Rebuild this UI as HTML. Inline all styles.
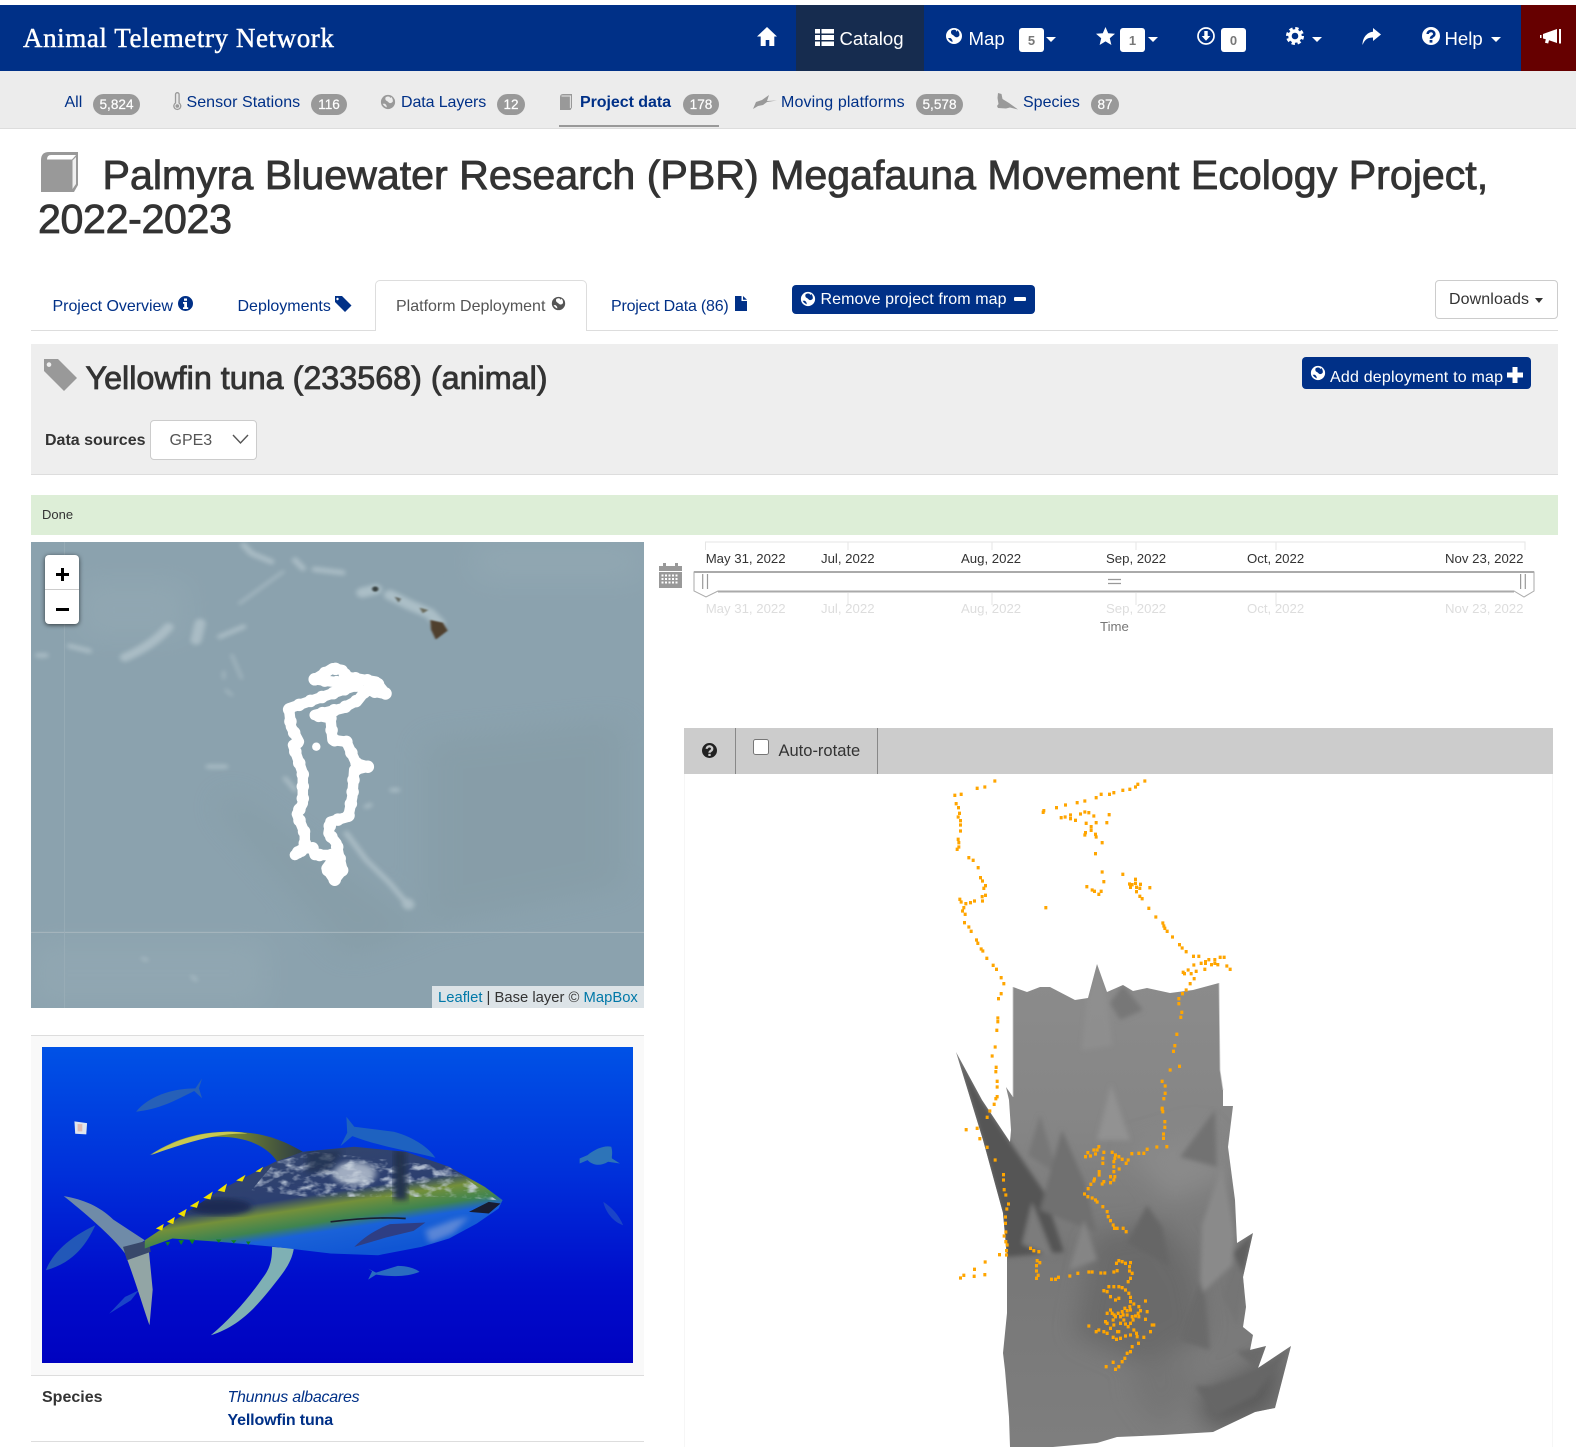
<!DOCTYPE html>
<html lang="en"><head><meta charset="utf-8"><title>Animal Telemetry Network</title>
<style>
html,body{margin:0;padding:0;background:#fff}
body{position:relative;width:1576px;height:1447px;overflow:hidden;font-family:"Liberation Sans",sans-serif;font-size:16px;color:#333}
a{color:#003087;text-decoration:none}
.a{position:absolute}
.t{position:absolute;white-space:nowrap;line-height:20px;height:20px}
.w{color:#fff}
.i{position:absolute;display:block;overflow:visible}
.b{position:absolute;top:94px;height:21px;border-radius:11px;background:#999;color:#fff;font-size:13.6px;line-height:22px;text-align:center;-webkit-text-stroke:.2px #fff}
.nb{position:absolute;top:28px;width:25px;height:24px;background:#fff;border-radius:3px;color:#777;font-size:13px;font-weight:bold;line-height:25px;text-align:center}
.c{position:absolute;width:0;height:0;border-left:5px solid transparent;border-right:5px solid transparent;border-top:5px solid #fff}
.d{position:absolute;font-size:13.2px;line-height:16px;white-space:nowrap;color:#333}
.e{position:absolute;font-size:13.2px;line-height:16px;white-space:nowrap;color:#ddd}
.btn{position:absolute;background:#003087;border-radius:4px}
.h{-webkit-text-stroke:.85px currentColor}
</style></head><body>
<svg width="0" height="0" style="position:absolute"><defs>
<symbol id="globe" viewBox="0 0 18 18"><path fill-rule="evenodd" fill="currentColor" d="M9 1a8 8 0 1 0 0 16A8 8 0 0 0 9 1zM6.500 3.500C5.500 5 6 7 7.500 7.800c1.500.7 2 2 3.500 2.400 1.200.3 2.500-.5 3.300-1.500.5-2-.2-4-1.800-5.500l-.8 1.500-1-1.600C9.800 2.500 8 2.700 6.500 3.500zM3 11c1 2 3 3.500 4.500 4 .3-1.500-.5-3-2-4z"/></symbol>
</defs></svg>

<!-- navbar -->
<div class="a" style="left:0;top:5px;width:1576px;height:66px;background:#003087"></div>
<div class="a" style="left:796px;top:5px;width:128px;height:66px;background:#162c4f"></div>
<div class="a" style="left:1521px;top:5px;width:55px;height:66px;background:#660000"></div>
<a class="t w" style="left:23px;top:24px;height:28px;line-height:28px;font-family:'Liberation Serif',serif;font-size:27px;letter-spacing:.58px;color:#fff;-webkit-text-stroke:.45px #fff">Animal Telemetry Network</a>
<svg class="i" style="left:757px;top:27px" width="20" height="19" viewBox="0 0 20 19"><path fill="#fff" d="M10 0L20 9.500h-2.700V19h-5v-6H8.700v6h-5V9.500H0z"/></svg>
<svg class="i" style="left:815px;top:29px" width="19" height="17" viewBox="0 0 19 17"><path fill="#fff" d="M0 0h5v4.500H0zM6.500 0H19v4.500H6.500zM0 6h5v5H0zM6.500 6H19v5H6.500zM0 12.500h5V17H0zM6.500 12.500H19V17H6.500z"/></svg>
<span class="t w" style="left:839.500px;top:29px;font-size:18.6px">Catalog</span>
<svg class="i w" style="left:945px;top:27px" width="18" height="18"><use href="#globe"/></svg>
<span class="t w" style="left:968.500px;top:29px;font-size:18.6px">Map</span>
<span class="nb" style="left:1019px">5</span><span class="c" style="left:1046px;top:37px"></span>
<svg class="i" style="left:1096px;top:27px" width="19" height="18" viewBox="0 0 19 18"><path fill="#fff" d="M9.500 0l2.700 6.200 6.800.6-5.200 4.400 1.600 6.800-5.900-3.600L3.600 18l1.600-6.800L0 6.800l6.800-.6z"/></svg>
<span class="nb" style="left:1120px">1</span><span class="c" style="left:1148px;top:37px"></span>
<svg class="i" style="left:1197px;top:27px" width="18" height="18" viewBox="0 0 18 18"><circle cx="9" cy="9" r="8" fill="none" stroke="#fff" stroke-width="1.700"/><path fill="#fff" d="M7.300 4h3.400v5h2.600L9 13.800 4.700 9h2.600z"/></svg>
<span class="nb" style="left:1221px">0</span>
<svg class="i" style="left:1286px;top:27px" width="18" height="18" viewBox="0 0 18 18"><circle cx="9" cy="9" r="5" fill="none" stroke="#fff" stroke-width="3.400"/><circle cx="9" cy="9" r="7.500" fill="none" stroke="#fff" stroke-width="3" stroke-dasharray="3.300 2.590"/></svg>
<span class="c" style="left:1312px;top:37px"></span>
<svg class="i" style="left:1362px;top:28px" width="19" height="17" viewBox="0 0 19 17"><path fill="#fff" d="M11 0l8 6.500-8 6.500V9.500C6 9.500 3 11 .5 17 .5 9.500 5 4.200 11 3.700z"/></svg>
<svg class="i" style="left:1422px;top:27px" width="18" height="18" viewBox="0 0 18 18"><circle cx="9" cy="9" r="9" fill="#fff"/><path fill="none" stroke="#003087" stroke-width="2.600" d="M5.700 7a3.300 2.900 0 1 1 5 2.400c-1.200.7-1.700 1.200-1.700 2.300"/><rect x="7.600" y="13" width="2.800" height="2.600" fill="#003087"/></svg>
<span class="t w" style="left:1444.500px;top:29px;font-size:18.6px">Help</span>
<span class="c" style="left:1491px;top:37px"></span>
<svg class="i" style="left:1540px;top:28px" width="21" height="17" viewBox="0 0 21 17"><path fill="#fff" d="M3 6l14-5v14l-8-2.800-.8 3.300-3.200-.8.800-3.400L3 10.500zM19 1h2v14.500h-2zM0 7h1.500v3H0z"/></svg>

<!-- subnav -->
<div class="a" style="left:0;top:71px;width:1576px;height:57px;background:#ececec;border-bottom:1px solid #ddd"></div>
<a class="t" style="left:64.500px;top:93px">All</a><span class="b" style="left:93px;width:47px">5,824</span>
<svg class="i" style="left:173px;top:93px" width="9" height="18" viewBox="0 0 9 18"><path fill="#e8e8e8" stroke="#999" stroke-width="1.300" d="M2.500 1.500a1.800 1.800 0 0 1 3.600 0V10a3.500 3.500 0 1 1-3.600 0z"/><circle cx="4.300" cy="13" r="1.800" fill="#999"/></svg>
<a class="t" style="left:186.500px;top:93px;letter-spacing:.05px">Sensor Stations</a><span class="b" style="left:311px;width:36px">116</span>
<svg class="i" style="left:380px;top:94px;color:#999" width="16" height="16"><use href="#globe"/></svg>
<a class="t" style="left:401px;top:93px;letter-spacing:-.1px">Data Layers</a><span class="b" style="left:497px;width:28px">12</span>
<svg class="i" style="left:560px;top:94px" width="12" height="16" viewBox="0 0 12 16"><path fill="#999" d="M0 3Q0 0 3 0h9v13.500L10.500 16H0z"/><path fill="none" stroke="#fff" stroke-width=".8" d="M1.500 2h9.500M10.300 2.500V14"/></svg>
<a class="t" style="left:580px;top:93px;font-weight:bold;letter-spacing:-.05px">Project data</a><span class="b" style="left:683px;width:36px">178</span>
<div class="a" style="left:559px;top:125px;width:160px;height:2px;background:#999"></div>
<svg class="i" style="left:753px;top:94px" width="24" height="15" viewBox="0 0 24 15"><path fill="#999" d="M0 15l3-7L9 6l7-5-2 6 10-.5-10 1.500-4 3-5 1z"/></svg>
<a class="t" style="left:781px;top:93px;letter-spacing:.12px">Moving platforms</a><span class="b" style="left:916px;width:47px">5,578</span>
<svg class="i" style="left:996px;top:93px" width="23" height="17" viewBox="0 0 23 17"><path fill="#999" d="M2 0l3.500 1 1 5 6.500 4 9 6.500-8-2-4 1-8-.5-1-2 1.500-2-1-6z"/></svg>
<a class="t" style="left:1023px;top:93px">Species</a><span class="b" style="left:1091px;width:28px">87</span>

<!-- title -->
<svg class="i" style="left:41px;top:152px" width="38" height="41" viewBox="0 0 38 41"><path fill="#999" d="M0 8Q0 0 8 0h29v33l-4 7H0z"/><path fill="#fff" d="M6 7.500Q6 3 10 3h25L31 7.500z"/><path fill="#fff" d="M31.500 8.500L35 5v27l-3.500 5z" opacity=".85"/></svg>
<h1 class="a h" style="margin:0;left:102.500px;top:153px;line-height:44px;font-size:41.15px;font-weight:normal;white-space:nowrap;color:#333">Palmyra Bluewater Research (PBR) Megafauna Movement Ecology Project,</h1>
<div class="a h" style="left:38px;top:197px;line-height:44px;font-size:41.15px;letter-spacing:-.35px;white-space:nowrap;color:#333">2022-2023</div>

<!-- tabs -->
<div class="a" style="left:31px;top:330px;width:1527px;height:1px;background:#ddd"></div>
<div class="a" style="left:375px;top:280px;width:212px;height:51px;box-sizing:border-box;background:#fff;border:1px solid #ddd;border-bottom:none;border-radius:5px 5px 0 0"></div>
<a class="t" style="left:52.500px;top:297px;letter-spacing:-.03px">Project Overview</a>
<svg class="i" style="left:178px;top:296px" width="15" height="15" viewBox="0 0 15 15"><circle cx="7.500" cy="7.500" r="7.500" fill="#003087"/><path fill="#fff" d="M6 2.500h3v2.300H6zM5 6h4v5.200h1.200V13H5v-1.800h1.200V7.800H5z"/></svg>
<a class="t" style="left:237.500px;top:297px">Deployments</a>
<svg class="i" style="left:335px;top:296px" width="17" height="16" viewBox="0 0 17 16"><path fill="#003087" fill-rule="evenodd" d="M0 0h7l9.500 9.500L10 16 0 6zM2.500 1.800a1.200 1.200 0 1 0 .01 0z"/></svg>
<span class="t" style="left:396px;top:297px;color:#555">Platform Deployment</span>
<svg class="i" style="left:551px;top:296px;color:#555" width="15" height="15"><use href="#globe"/></svg>
<a class="t" style="left:611px;top:297px;letter-spacing:-.2px">Project Data (86)</a>
<svg class="i" style="left:735px;top:296px" width="12" height="15" viewBox="0 0 12 15"><path fill="#003087" d="M0 0h6.500v5H12v10H0zM8 0l4 3.700H8z"/></svg>

<div class="btn" style="left:792px;top:285px;width:243px;height:29px"></div>
<svg class="i w" style="left:800px;top:291px" width="16" height="16"><use href="#globe"/></svg>
<span class="t w" style="left:820.500px;top:290px;letter-spacing:.09px">Remove project from map</span>
<div class="a" style="left:1014px;top:297px;width:12px;height:4px;background:#fff;border-radius:1px"></div>

<div class="a" style="left:1435px;top:280px;width:123px;height:39px;box-sizing:border-box;border:1px solid #ccc;border-radius:4px;background:#fff"></div>
<span class="t" style="left:1449px;top:290px;letter-spacing:.1px">Downloads</span>
<span class="c" style="left:1535px;top:298px;border-top-color:#333;border-left-width:4.500px;border-right-width:4.500px"></span>

<!-- panel -->
<div class="a" style="left:31px;top:344px;width:1527px;height:130px;background:#eee;border-bottom:1px solid #ddd"></div>
<svg class="i" style="left:44px;top:359px" width="33" height="32" viewBox="0 0 33 32"><path fill="#999" fill-rule="evenodd" d="M0 0h14l19 19-13 13L0 12zM5 3.300a2.300 2.300 0 1 0 .01 0z"/></svg>
<div class="a h" style="left:85.500px;top:358px;line-height:40px;font-size:32.3px;white-space:nowrap;color:#333">Yellowfin tuna (233568) (animal)</div>
<div class="btn" style="left:1302px;top:357px;width:229px;height:32px"></div>
<svg class="i w" style="left:1310px;top:365px" width="16" height="16"><use href="#globe"/></svg>
<span class="t w" style="left:1330px;top:367.500px;letter-spacing:.2px">Add deployment to map</span>
<svg class="i" style="left:1507px;top:367px" width="16" height="16" viewBox="0 0 16 16"><path fill="#fff" d="M5.500 0h5v5.500H16v5h-5.500V16h-5v-5.500H0v-5h5.500z"/></svg>
<span class="t" style="left:45px;top:431px;font-weight:bold;color:#333">Data sources</span>
<div class="a" style="left:150px;top:420px;width:107px;height:40px;box-sizing:border-box;background:#fff;border:1px solid #ccc;border-radius:4px"></div>
<span class="t" style="left:169.500px;top:431px;color:#555">GPE3</span>
<svg class="i" style="left:232px;top:434px" width="17" height="11" viewBox="0 0 17 11"><path fill="none" stroke="#555" stroke-width="1.400" d="M1 1l7.500 8L16 1"/></svg>

<!-- green -->
<div class="a" style="left:31px;top:495px;width:1527px;height:40px;background:#ddeed7"></div>
<div class="t" style="left:42px;top:505px;font-size:13px;color:#333">Done</div>

<!-- map -->
<div class="a" style="left:31px;top:542px;width:613px;height:466px;background:#8ba2ae;overflow:hidden">
<svg class="i" style="left:0;top:0;overflow:hidden" width="613" height="466" viewBox="2.500 6 1550 1398" preserveAspectRatio="none">
<defs><filter id="bl" x="-30%" y="-30%" width="160%" height="160%"><feGaussianBlur stdDeviation="6"/></filter><filter id="bs" x="-30%" y="-30%" width="160%" height="160%"><feGaussianBlur stdDeviation="2.500"/></filter><filter id="b2" x="-30%" y="-30%" width="160%" height="160%"><feGaussianBlur stdDeviation="40"/></filter></defs>
<g filter="url(#b2)" opacity=".3">
<path fill="#7f949c" d="M500 750l500 420-200 80-320-440zM1000 600l500-60v500l-500 120z"/>
<path fill="#9db1ba" d="M0 1200h600v200H0zM120 120h280v180H120zM1120 0h430v130h-430z"/>
</g>
<g filter="url(#bl)" fill="none" stroke="#b4c5cc" stroke-linecap="round" opacity=".75">
<path stroke-width="26" d="M240 352c40-20 80-50 110-90"/><path stroke-width="14" d="M100 318l50 15M20 346h20"/>
<path stroke-width="28" d="M430 250l-10 50"/><path stroke-width="14" d="M480 290l60-30"/>
<path stroke-width="16" d="M540 15l20 25 50 25M670 60l20 25M720 88l70 10"/>
<path stroke-width="7" d="M530 190l110-95"/>
<path stroke-width="6" d="M510 345l25 70M490 395v20M495 450l15 15"/>
<path stroke-width="14" d="M800 880l50 80 60 70 50 70"/><path stroke-width="30" d="M955 1090l2 4"/>
<path stroke-width="12" d="M645 715l25 35M450 680h45M850 800l10-5M915 750h15"/>
<path stroke-width="8" d="M285 1255l10 5M410 1310l10 10"/>
<path stroke-width="30" stroke="#b6c8cf" d="M840 158l35-10M910 165l50 30 50 25 25 30"/>
</g>
<path stroke="#a7b7be" stroke-width="3" d="M0 1177h1555"/><path stroke="#9aaeb7" stroke-width="2" d="M87 0v1410"/>
<g filter="url(#bs)"><circle cx="873" cy="147" r="8" fill="#37413f"/><path fill="#5d625a" d="M922 170l16 6-6 12z"/><path fill="#6a6a5c" d="M985 203l22 7-14 10z"/>
<path fill="#4f3f2e" d="M1012 240l32 8 12 24-30 27-12-30z"/></g>
</svg>
<svg class="i" style="left:-31px;top:-542px" width="700" height="1100" viewBox="0 0 700 1100"><defs><path id="trk" d="M314.700 679.300L332.500 668.300 342.400 670 346.300 676.700 376 681.700 385.900 694 366 690 358.200 700 342.400 708.300 314.700 715 330.500 718.300 332.500 740 346.300 741.700 356.200 763.300 368 766.700 354.200 770 352.300 796.700 348.300 816.700 330.500 821.700 328.500 833.300 336.500 843.300 338.400 853.300 342.400 870 334.500 880 326.600 868.300 336.500 855 314.700 855 312.700 848.300 304.800 848.300 294.900 855 304.800 846.700 304.800 833.300 296.900 814 302.800 803.300 302.800 773.300 293 745 298.900 741.700 291 726.700 289 708.300 342.400 690 358.200 685 314.700 679.300"/></defs><use href="#trk" fill="none" stroke="#fff" stroke-width="10.500" stroke-linecap="round" stroke-linejoin="round"/><use href="#trk" fill="none" stroke="#fff" stroke-width="12.500" stroke-linecap="round" stroke-dasharray="0 12"/><path fill="#fff" d="M326 858h16l3 13-11 12-9-14z"/><circle cx="316.300" cy="746.700" r="4.200" fill="#fff"/></svg>
<div class="a" style="left:14px;top:13px;width:34px;height:69px;background:#fff;border-radius:4px;box-shadow:0 1px 5px rgba(0,0,0,.65)">
<div class="a" style="left:0;top:34px;width:34px;height:1px;background:#ccc"></div>
<div class="a" style="left:11px;top:18px;width:13px;height:2.500px;background:#000"></div><div class="a" style="left:16.200px;top:13px;width:2.500px;height:13px;background:#000"></div>
<div class="a" style="left:11px;top:53px;width:13px;height:2.500px;background:#000"></div></div>
<div class="a" style="left:401px;top:444px;width:212px;height:22px;background:rgba(255,255,255,.7);line-height:24px;font-size:14.8px;white-space:nowrap;color:#333;padding-left:6px;box-sizing:border-box"><a style="color:#0078a8">Leaflet</a> | Base layer © <a style="color:#0078a8">MapBox</a></div>
</div>

<!-- fish -->
<div class="a" style="left:31px;top:1035px;width:613px;height:339px;background:#f9f9f9;border-top:1px solid #ddd;border-bottom:1px solid #ddd"></div>
<svg class="i" style="left:42px;top:1047px;overflow:hidden" width="591" height="316" viewBox="30 51 1495 947" preserveAspectRatio="none">
<defs>
<linearGradient id="sea" x1="0" y1="0" x2="0" y2="1"><stop offset="0" stop-color="#0052e6"/><stop offset=".4" stop-color="#0030da"/><stop offset=".75" stop-color="#000ccb"/><stop offset="1" stop-color="#0002c0"/></linearGradient>
<linearGradient id="body" gradientUnits="userSpaceOnUse" x1="720" y1="350" x2="780" y2="680"><stop offset="0" stop-color="#33456e"/><stop offset=".42" stop-color="#2c3f70"/><stop offset=".53" stop-color="#74903a"/><stop offset=".67" stop-color="#3f8450"/><stop offset=".76" stop-color="#1a62d8"/><stop offset="1" stop-color="#1056d4"/></linearGradient>
<linearGradient id="fin" x1="0" y1="0" x2="1" y2="0"><stop offset="0" stop-color="#a8b860"/><stop offset=".5" stop-color="#7a8c30"/><stop offset="1" stop-color="#2c3c44"/></linearGradient>
<filter id="f1"><feGaussianBlur stdDeviation="8"/></filter>
<filter id="mot" x="-10%" y="-10%" width="120%" height="120%"><feTurbulence type="fractalNoise" baseFrequency=".03 .05" numOctaves="3" seed="4"/><feColorMatrix values="0 0 0 0 .58 0 0 0 0 .65 0 0 0 0 .75 3 0 0 0 -1.350"/><feComposite operator="in" in2="SourceGraphic"/></filter>
<clipPath id="bc"><path d="M290 630L480 480 620 395 690 365 820 350 950 365 1060 410 1150 470 1195 510 1185 535 1130 580 1060 625 990 650 880 675 760 670 620 650 480 635 360 625 290 655z"/></clipPath>
</defs>
<rect x="30" y="51" width="1495" height="947" fill="url(#sea)"/>
<!-- small fish -->
<g fill="#2660b8"><path d="M268 245c30-45 90-70 150-70l17-30-8 30 8 30-20-22c-50 30-90 55-147 62z"/>
<path fill="#1e62c0" d="M800 260l20 30 100 15c50 15 90 50 105 78-60-20-130-30-210-65l-30 30 17-40z"/>
<path fill="#2258b8" d="M40 720c15-50 60-100 125-135-20 50-50 110-125 135z"/>
<path fill="#2a6cc0" d="M855 715l20 12 55-20c25 0 45 8 55 18-30 15-70 15-110 8l-20 15 10-25z"/>
<path fill="#2d74b8" d="M1390 385l20-10c20-20 45-30 60-25 5 20 0 30 2 35l20 15-30-5c-20 15-40 10-52-5l-20 10z"/>
<path fill="#1a44c8" d="M1450 515c20 15 40 40 50 70-25-10-45-40-50-70zM200 850l40-50 35-20-20 30z"/></g>
<path fill="#dfe5ee" d="M112 274l32 5-2 34-28-2z"/><path fill="#e0a090" d="M120 282h12v22h-12z" opacity=".6"/>
<!-- tail -->
<path fill="#6f8ba8" d="M85 498c50 10 90 30 125 70l80 62-50 40c-30-50-110-130-155-172z"/>
<path fill="#92a5a5" d="M240 670l60-12 10 120-8 107c-15-50-35-130-62-215z"/>
<path fill="#38486a" d="M235 650l65-20 5 35-60 25z"/>
<!-- fins -->
<path fill="url(#fin)" d="M302 375c60-45 120-70 200-70 80 0 130 20 188 60l-65 30c-15-30-50-60-100-70-70-15-140 5-223 50z"/>
<path fill="#c8c850" d="M305 375c60-45 120-68 195-70 20 0 40 2 50 6-70-3-140 20-245 64z"/>
<path fill="#7fb0b4" d="M612 650l55 5c-5 40-25 70-45 100-40 60-85 130-165 160 50-50 95-110 130-170 20-30 25-55 25-95z"/>
<!-- body -->
<path fill="url(#body)" d="M290 630L480 480 620 395 690 365 820 350 950 365 1060 410 1150 470 1195 510 1185 535 1130 580 1060 625 990 650 880 675 760 670 620 650 480 635 360 625 290 655z"/>
<g clip-path="url(#bc)">
<path d="M620 395L720 365 1060 410 1180 510 1050 500 700 500 560 480z" fill="#fff" filter="url(#mot)" opacity=".85"/>
<ellipse cx="820" cy="430" rx="55" ry="35" fill="#c8d2dc" filter="url(#f1)" opacity=".75"/>
<path d="M920 360h30l5 150h-35z" fill="#22304e" filter="url(#f1)"/>
<path d="M700 360h90l-30 60-60 10z" fill="#22304e" filter="url(#f1)" opacity=".7"/>
<ellipse cx="480" cy="530" rx="80" ry="25" fill="#1c2c52" filter="url(#f1)"/>
<path d="M1000 600l70-30 40-10-40 50-60 30z" fill="#8aa4d8" filter="url(#f1)" opacity=".6"/>
<path fill="#181c30" d="M1110 545l50-30 30 5-30 30z"/>
</g>
<path fill="none" stroke="#1a2030" stroke-width="5" d="M760 575c70-10 130-15 190-10"/>
<path fill="#2e3e84" d="M820 650c30-35 60-55 90-68l90-5-30 25-70 20z"/>
<g fill="#f0e000"><path d="M318 595l20-14-4 20zM346 575l20-15-4 22zM374 551l22-15-6 24zM404 528l24-17-6 22zM438 503l24-19-6 24zM474 481l24-21-6 26zM521 451l24-17-8 20zM570 424l20-14-8 16z"/></g>
<g fill="#108020"><path d="M342 635h12l-6 12zM375 630h14l-7 14zM402 628h15l-7 14zM470 628h14l-7 10zM508 630h14l-7 10zM546 634h12l-6 10z"/></g>
</svg>
<div class="t" style="left:42px;top:1388px;font-weight:bold;color:#333">Species</div>
<a class="t" style="left:227.500px;top:1388px;font-style:italic;letter-spacing:-.25px">Thunnus albacares</a>
<a class="t" style="left:227.500px;top:1411px;font-weight:bold;letter-spacing:-.15px">Yellowfin tuna</a>
<div class="a" style="left:31px;top:1441px;width:613px;height:1px;background:#ddd"></div>

<!-- timeline -->
<svg class="i" style="left:659px;top:563px" width="23" height="25" viewBox="0 0 23 25"><path fill="#999" fill-rule="evenodd" d="M0 3h4V0h3v3h9V0h3v3h4v5H0zM0 9h23v16H0zM2.500 11.500v2h2v-2zM6 11.500v2h2v-2zM9.500 11.500v2h2v-2zM13 11.500v2h2v-2zM16.500 11.500v2h2v-2zM2.500 15v2h2v-2zM6 15v2h2v-2zM9.500 15v2h2v-2zM13 15v2h2v-2zM16.500 15v2h2v-2zM2.500 18.500v2h2v-2zM6 18.500v2h2v-2zM9.500 18.500v2h2v-2zM13 18.500v2h2v-2zM16.500 18.500v2h2v-2z"/></svg>
<svg class="i" style="left:690px;top:540px" width="850" height="70" viewBox="690 540 850 70">
<path fill="none" stroke="#e5e5e5" d="M705.500 550v-8h819.500v8M848 542v8M992 542v8M1136 542v8M1276 542v8M848 593v12M992 593v12M1136 593v12M1276 593v12"/>
<path fill="#fff" stroke="#aaa" stroke-width="1" d="M694 572H1534V591L1524 597 1514 591H718L706 597 694 591z"/>
<path stroke="#aaa" stroke-width="2" fill="none" d="M694 572H1534M718 591.500H1514"/>
<path stroke="#999" stroke-width="1.200" fill="none" d="M702.700 574v15M707.500 574v15M1520.600 574v15M1525.300 574v15M1108 579.500h13M1108 583.500h13"/>
</svg>
<span class="d" style="left:705.700px;top:551px">May 31, 2022</span><span class="d" style="left:821px;top:551px">Jul, 2022</span><span class="d" style="left:961px;top:551px">Aug, 2022</span><span class="d" style="left:1106px;top:551px">Sep, 2022</span><span class="d" style="left:1247px;top:551px">Oct, 2022</span><span class="d" style="left:1445px;top:551px">Nov 23, 2022</span>
<span class="e" style="left:705.700px;top:600.500px">May 31, 2022</span><span class="e" style="left:821px;top:600.500px">Jul, 2022</span><span class="e" style="left:961px;top:600.500px">Aug, 2022</span><span class="e" style="left:1106px;top:600.500px">Sep, 2022</span><span class="e" style="left:1247px;top:600.500px">Oct, 2022</span><span class="e" style="left:1445px;top:600.500px">Nov 23, 2022</span>
<span class="d" style="left:1100px;top:619px;color:#777">Time</span>

<!-- 3D toolbar -->
<div class="a" style="left:684px;top:728px;width:869px;height:719px;border-left:1px solid #f6f6f6;border-right:1px solid #f6f6f6;box-sizing:border-box"></div>
<div class="a" style="left:684px;top:728px;width:869px;height:46px;background:#ccc"></div>
<div class="a" style="left:735px;top:728px;width:1px;height:46px;background:#888"></div>
<div class="a" style="left:877px;top:728px;width:1px;height:46px;background:#888"></div>
<svg class="i" style="left:702px;top:743px" width="15" height="15" viewBox="0 0 18 18"><circle cx="9" cy="9" r="9" fill="#222"/><path fill="none" stroke="#ccc" stroke-width="2.800" d="M5.700 7a3.300 2.900 0 1 1 5 2.400c-1.200.7-1.700 1.200-1.700 2.300"/><rect x="7.600" y="13" width="2.800" height="2.600" fill="#ccc"/></svg>
<input type="checkbox" class="a" style="left:753px;top:739px;width:16px;height:16px;margin:0">
<span class="t" style="left:778.500px;top:741px;font-size:16.5px;color:#333">Auto-rotate</span>

<!-- 3D -->
<svg class="i" style="left:0;top:0" width="1576" height="1447" viewBox="0 0 1576 1447">
<defs>
<clipPath id="sc"><path id="sp" d="M1013 987L1027 992 1040 987 1050 987 1075 1000 1088 998 1097 964 1107 992 1123 985 1133 991 1147 988 1170 993 1193 990 1219 983 1220 1070 1223 1090 1223 1106 1233 1106 1228 1147 1235 1200 1237 1243 1253 1233 1243 1277 1246 1307 1243 1327 1253 1335 1250 1350 1266 1346 1258 1368 1291 1346 1275 1408 1255 1412 1213 1432 1163 1435 1117 1437 1097 1443 1053 1447 1010 1447 1009 1417 1005 1370 1003 1353 1007 1313 1007 1257 1003 1213 983 1140 956 1052 982 1100 1010 1142 1011 1130 1009 1100 1006 1087 1013 1097z"/></clipPath>
<linearGradient id="sf" x1="0" y1="0" x2="0" y2="1"><stop offset="0" stop-color="#8c8c8c"/><stop offset=".35" stop-color="#858585"/><stop offset=".6" stop-color="#777"/><stop offset="1" stop-color="#7e7e7e"/></linearGradient>
<filter id="s1" x="-30%" y="-30%" width="160%" height="160%"><feGaussianBlur stdDeviation="2.400"/></filter>
<filter id="s2" x="-50%" y="-50%" width="200%" height="200%"><feGaussianBlur stdDeviation="12"/></filter>
</defs>
<g clip-path="url(#sc)">
<rect x="950" y="960" width="350" height="487" fill="url(#sf)"/>
<g filter="url(#s2)">
<path fill="#6a6a6a" d="M1095 1235l70-10 30 50 10 60-60 30-70-30z"/>
<path fill="#8a8a8a" d="M1130 1150l70-20 30 40-60 30z"/>
<path fill="#707070" d="M1150 1340l50 40-40 50-30-40z" opacity=".6"/>
<path fill="#5a5a5a" d="M1197 1400l90-50-15 60-60 20z"/>
</g>
<g filter="url(#s1)">
<path fill="#777" d="M1123 985l-13 18 10 17 23-10z"/>
<path fill="#929292" d="M1097 964l-10 36-5 50 30-5-6-50z" opacity=".6"/>
<path fill="#929292" d="M1111 1085l-14 55 33 0z"/>
<path fill="#545454" d="M956 1052l26 48 28 42 34 50 20 60-58 5-4-44-20-73z"/>
<path fill="#777" d="M1040 1115l-12 40 30 20z"/>
<path fill="#6f6f6f" d="M1062 1130l-22 80 57 23 -12-50z"/>
<path fill="#7c7c7c" d="M1032 1202l-10 42 32 14z"/>
<path fill="#858585" d="M1084 1220l-15 50 28-10z"/>
<path fill="#666" d="M1147 1205l-20 38 43 24 -8-40z"/>
<path fill="#727272" d="M1215 1110l-35 47 37 10z"/>
<path fill="#8a8a8a" d="M1222 1165l-20 60 -2 70 32-30 3-30z"/>
<path fill="#747474" d="M1240 1245l-18 50 15 30 10-60z"/>
<path fill="#6a6a6a" d="M1200 1280l-20 60 30 10 -5-50z"/>
<path fill="#5e5e5e" d="M1253 1233l-20 20 10 20z"/>
<path fill="#666" d="M1291 1346l-30 25-50 15-16 0 20 30 40-20z"/>
<path fill="#6a6a6a" d="M1266 1346l-30 5 20 18z"/>
</g>
</g>
<path fill="none" stroke="#c8c8c8" stroke-width=".8" d="M1219 983L1220 1070 1223 1090M1013 987v110"/>
<g fill="none" stroke="#ffa500" stroke-width="10" transform="translate(930 770) scale(.33333)">
<path d="M190 33h9M160 51h9M137 55h9M89 73h9M70 76h9M74 101h9M81 113h9M84 130h9M80 141h9M87 152h9M87 165h9M87 183h9M80 208h9M82 218h9M82 231h9M77 238h9M112 263h9M125 271h9M140 293h9M147 323h9M153 333h9M162 347h9M157 355h9M162 376h9M152 380h9M153 393h9M129 393h9M117 398h9M103 401h9M85 388h9M89 396h9M97 413h9M93 423h9M101 433h9M99 458h9M112 471h9M119 484h9M135 510h9M139 520h9M149 537h9M154 543h9M166 565h9M185 586h9M195 598h9M209 623h9M217 641h9M209 671h9M201 686h9M199 744h9M199 755h9M196 781h9M191 831h9M182 858h9M194 892h9M193 905h9M197 934h9M197 951h9M197 980h9M193 986h9M188 1003h9"/>
<path d="M640 33h9M619 43h9M612 51h9M595 58h9M574 61h9M547 68h9M534 73h9M509 73h9M494 83h9M460 93h9M437 98h9M402 105h9M375 113h9M337 122h9M335 127h9M389 143h9M401 141h9M417 135h9M417 146h9M432 151h9M447 132h9M460 126h9M472 128h9M487 138h9M533 134h9M526 158h9M494 158h9M464 160h9M479 170h9M479 181h9M462 188h9M460 195h9M492 193h9M494 201h9M512 218h9M492 251h9M512 306h9M517 335h9M466 350h9M482 360h9M489 364h9M502 373h9M509 364h9"/>
<path d="M574 313h9M612 328h9M594 342h9M602 344h9M612 340h9M597 352h9M615 352h9M625 355h9M627 343h9M615 365h9M655 353h9M625 379h9M632 386h9M652 415h9M673 441h9M694 459h9M697 468h9M700 475h9M707 484h9M723 501h9M744 524h9M752 534h9M764 545h9M786 559h9M802 559h9M866 562h9M878 562h9M850 569h9M832 569h9M822 575h9M822 580h9M809 580h9M787 585h9M850 580h9M840 584h9M859 584h9M886 588h9M896 598h9M820 598h9M794 604h9M770 600h9M755 607h9M759 611h9M779 611h9M788 626h9M776 641h9M764 660h9M753 671h9M742 686h9M742 701h9M751 727h9M748 742h9M736 793h9M730 827h9M726 844h9M744 889h9M716 900h9M692 934h9M701 948h9M701 970h9M697 986h9M692 1015h9M343 413h9"/>
</g>
<g fill="none" stroke="#ffa500" stroke-width="10" transform="translate(930 1100) scale(.33333)">
<path d="M175 33h9M167 52h9M104 89h9M137 85h9M145 116h9M167 142h9M191 180h9M216 224h9M216 240h9M218 269h9M223 285h9M231 312h9M226 327h9M222 351h9M222 370h9M223 396h9M218 408h9M223 425h9M227 435h9M225 452h9M225 465h9M204 464h9M161 486h9M129 508h9M97 526h9M87 534h9M128 529h9M160 524h9"/>
<path d="M692 28h9M694 35h9M700 65h9M700 82h9M696 102h9M696 115h9M706 140h9M676 141h9M647 148h9M637 160h9M622 160h9M601 161h9"/>
<path d="M590 180h9M584 190h9M572 178h9M562 170h9M552 165h9M542 157h9M517 157h9M502 140h9M497 150h9M487 150h9M477 168h9M492 162h9M462 170h9M469 158h9M514 175h9M514 190h9M550 175h9M547 185h9M547 200h9M563 207h9M547 215h9M550 230h9M537 230h9M547 240h9M537 248h9M517 245h9M512 252h9M503 215h9M503 225h9M489 237h9M487 243h9M478 253h9M470 266h9M459 282h9M469 290h9M482 294h9M492 300h9M497 306h9M514 320h9M527 335h9M530 350h9M537 362h9M545 375h9M549 385h9M557 385h9M575 385h9M584 395h9"/>
<path d="M297 445h9M307 452h9M322 455h9M317 482h9M325 488h9M315 497h9M315 513h9M320 526h9M315 535h9M360 538h9M372 538h9M381 532h9M415 528h9M439 520h9M472 516h9M482 516h9M508 519h9M520 519h9M547 516h9M557 512h9M555 490h9M562 482h9M572 485h9M582 490h9M597 488h9M594 500h9M594 513h9M602 520h9M597 535h9M590 545h9"/>
<path d="M532 560h9M547 560h9M562 560h9M572 563h9M582 570h9M592 580h9M597 592h9M597 605h9M607 612h9M517 572h9M527 575h9M537 590h9M552 600h9M562 595h9M642 603h9M622 620h9M627 632h9M647 635h9M597 630h9M587 632h9M572 635h9M552 650h9M542 640h9M537 630h9M527 640h9M545 660h9M522 665h9M527 670h9M567 650h9M577 660h9M587 645h9M602 650h9M612 648h9M622 650h9M642 658h9M662 675h9M667 675h9M657 695h9M637 712h9M617 710h9M607 690h9M597 670h9M582 672h9M567 670h9M547 675h9M537 685h9M527 700h9M517 695h9M502 690h9M494 695h9M472 678h9M562 695h9M597 705h9M582 708h9M567 715h9M555 718h9M545 712h9M621 730h9M602 740h9M597 755h9M587 760h9M580 775h9M572 785h9M562 800h9M552 808h9M545 787h9M524 800h9M560 640h9M580 625h9M595 620h9M605 660h9M590 680h9M575 645h9M548 645h9M620 640h9M615 700h9M558 695h9"/>
</g>
</svg>
</body></html>
